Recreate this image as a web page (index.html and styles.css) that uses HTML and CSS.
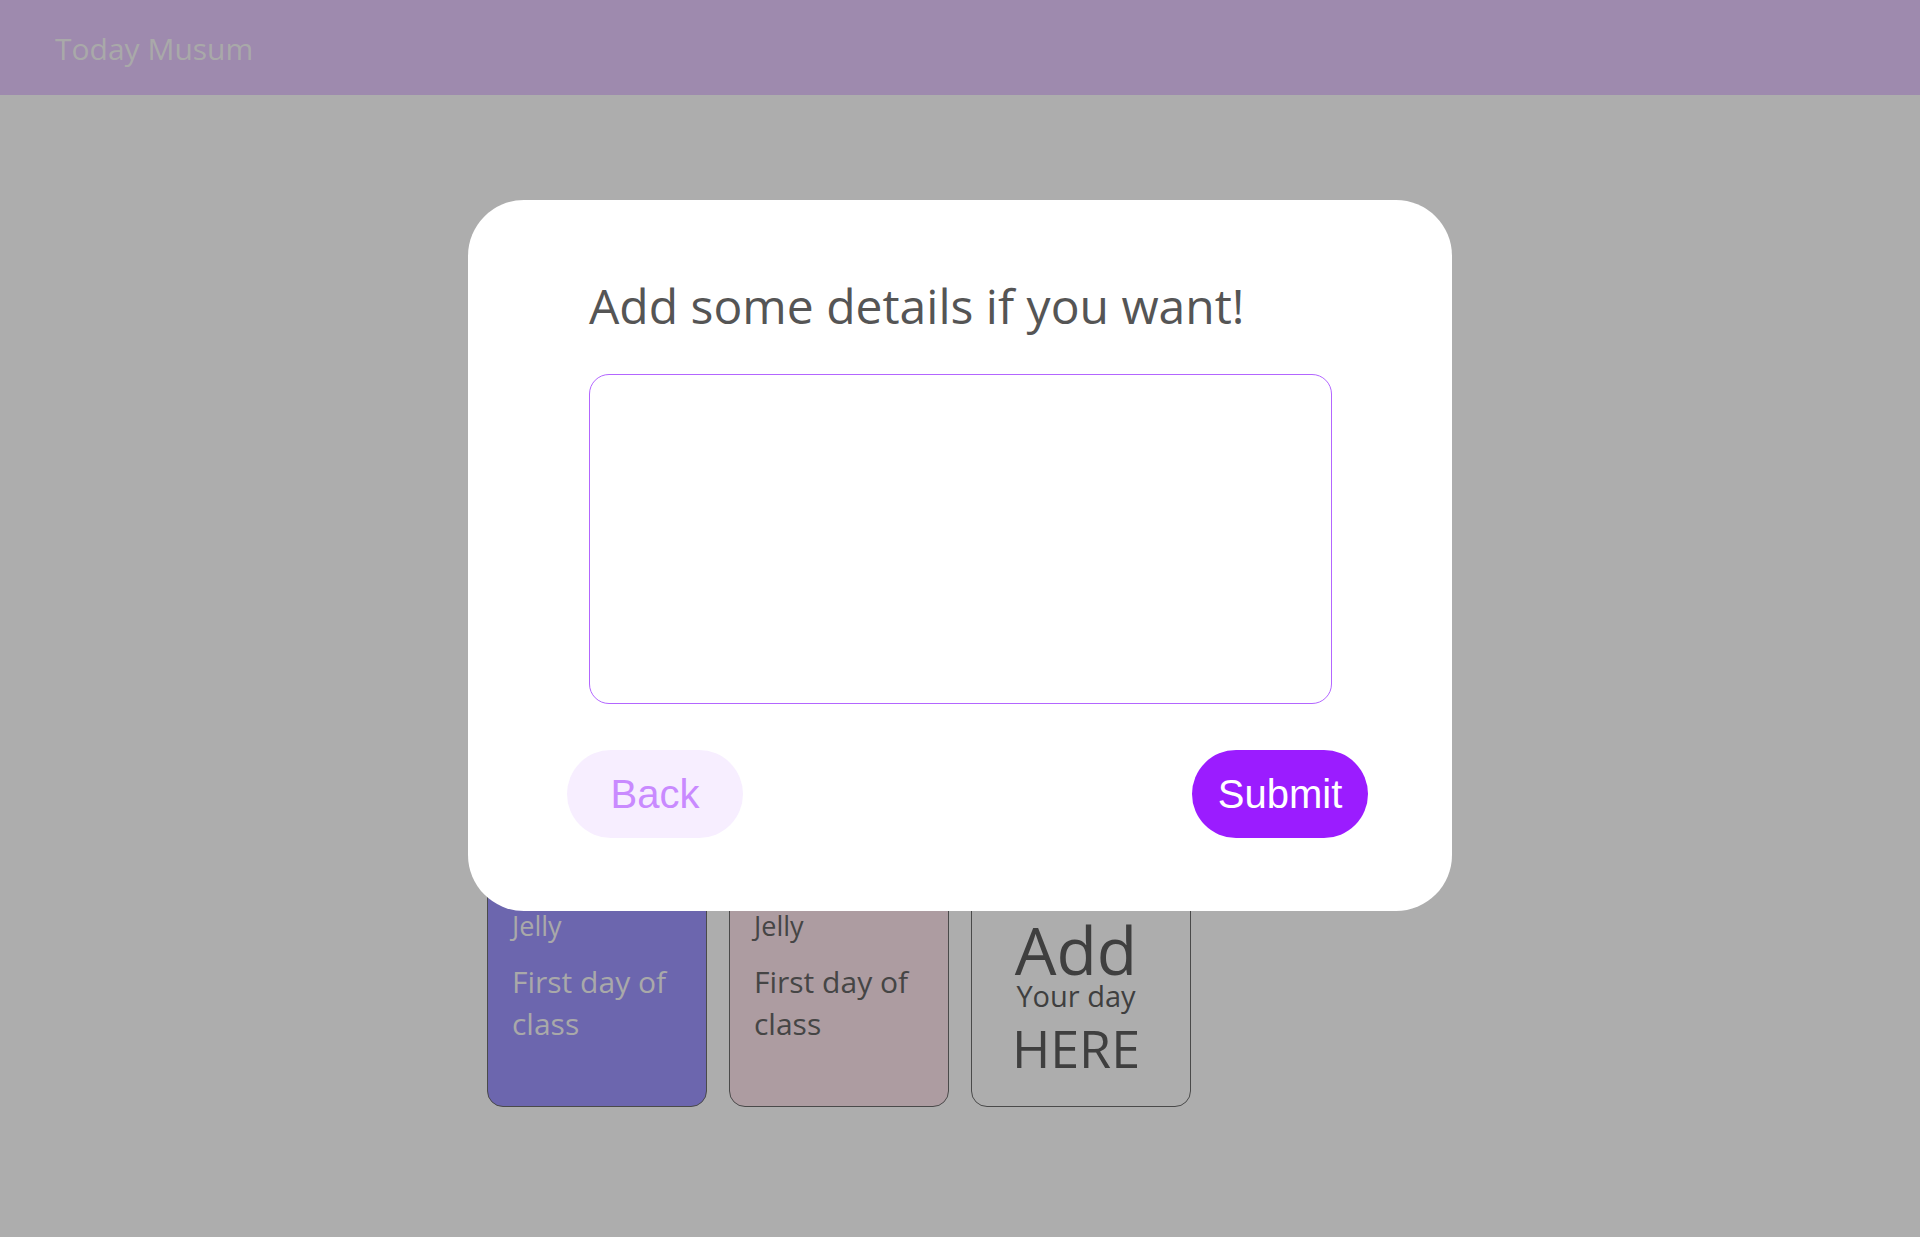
FILE: index.html
```html
<!DOCTYPE html>
<html lang="en">
<head>
<meta charset="utf-8">
<title>Today Musum</title>
<link rel="stylesheet" href="styles.css">
</head>
<body>
<header class="topbar">
  <span class="brand">Today Musum</span>
</header>
<main class="content">
  <div class="cards">
    <div class="card card-blue">
      <div class="card-author">Jelly</div>
      <div class="card-title">First day of class</div>
    </div>
    <div class="card card-rose">
      <div class="card-author">Jelly</div>
      <div class="card-title">First day of class</div>
    </div>
    <div class="card card-add">
      <div class="add-big">Add</div>
      <div class="add-small">Your day</div>
      <div class="add-here">HERE</div>
    </div>
  </div>
</main>
<div class="modal">
  <h2 class="modal-title">Add some details if you want!</h2>
  <textarea class="details"></textarea>
  <div class="actions">
    <button class="btn btn-back">Back</button>
    <button class="btn btn-submit">Submit</button>
  </div>
</div>
</body>
</html>
```
FILE: styles.css
```css
html, body {
  margin: 0;
  padding: 0;
}
body {
  background: #adadad;
  font-family: "Open Sans", "Noto Sans", sans-serif;
  min-height: 1237px;
  position: relative;
}
.topbar {
  height: 95px;
  background: #9e8aae;
  display: flex;
  align-items: center;
  padding-left: 55px;
  box-sizing: border-box;
}
.brand {
  color: #a9a9a9;
  font-size: 30px;
  line-height: 1;
  margin-top: 2px;
}
.content {
  width: 946px;
  margin: 0 auto;
  padding-top: 700px;
}
.cards {
  display: flex;
  gap: 22px;
}
.card {
  width: 220px;
  height: 312px;
  box-sizing: border-box;
  border: 1px solid #4a4a4a;
  border-radius: 16px;
  padding: 113px 18px 0 24px;
}
.card-author {
  font-size: 27px;
  line-height: 34px;
}
.card-title {
  margin-top: 18px;
  font-size: 30px;
  line-height: 42px;
}
.card-blue {
  background: #6c66ae;
  color: #a9a9a9;
}
.card-rose {
  background: #ad9ca1;
  color: #454545;
}
.card-add {
  background: #adadad;
  color: #3f3f3f;
  display: flex;
  flex-direction: column;
  align-items: center;
  padding: 123px 10px 0 0;
}
.add-big {
  font-size: 66px;
  line-height: 60px;
}
.add-small {
  font-size: 29px;
  line-height: 32px;
  margin-top: 1px;
}
.add-here {
  font-size: 52px;
  line-height: 58px;
  margin-top: 7px;
}
.modal {
  position: absolute;
  top: 200px;
  left: calc(50% - 492px);
  width: 984px;
  height: 711px;
  box-sizing: border-box;
  background: #ffffff;
  border-radius: 56px;
  padding: 75px 120px 0 121px;
}
.modal-title {
  margin: 0;
  font-weight: 400;
  font-size: 48px;
  line-height: 62px;
  color: #555555;
}
.details {
  display: block;
  margin-top: 37px;
  width: 100%;
  height: 330px;
  box-sizing: border-box;
  border: 1px solid #b366ff;
  border-radius: 20px;
  resize: none;
  outline: none;
  background: #fff;
}
.actions {
  display: flex;
  justify-content: space-between;
  margin: 46px -36px 0 -22px;
}
.btn {
  width: 176px;
  height: 88px;
  border: none;
  border-radius: 44px;
  font-family: "Liberation Sans", Arial, sans-serif;
  font-size: 40px;
  padding: 0;
  cursor: pointer;
}
.btn-back {
  background: #f7eeff;
  color: #c98aff;
}
.btn-submit {
  background: #9b1cff;
  color: #ffffff;
}
```
